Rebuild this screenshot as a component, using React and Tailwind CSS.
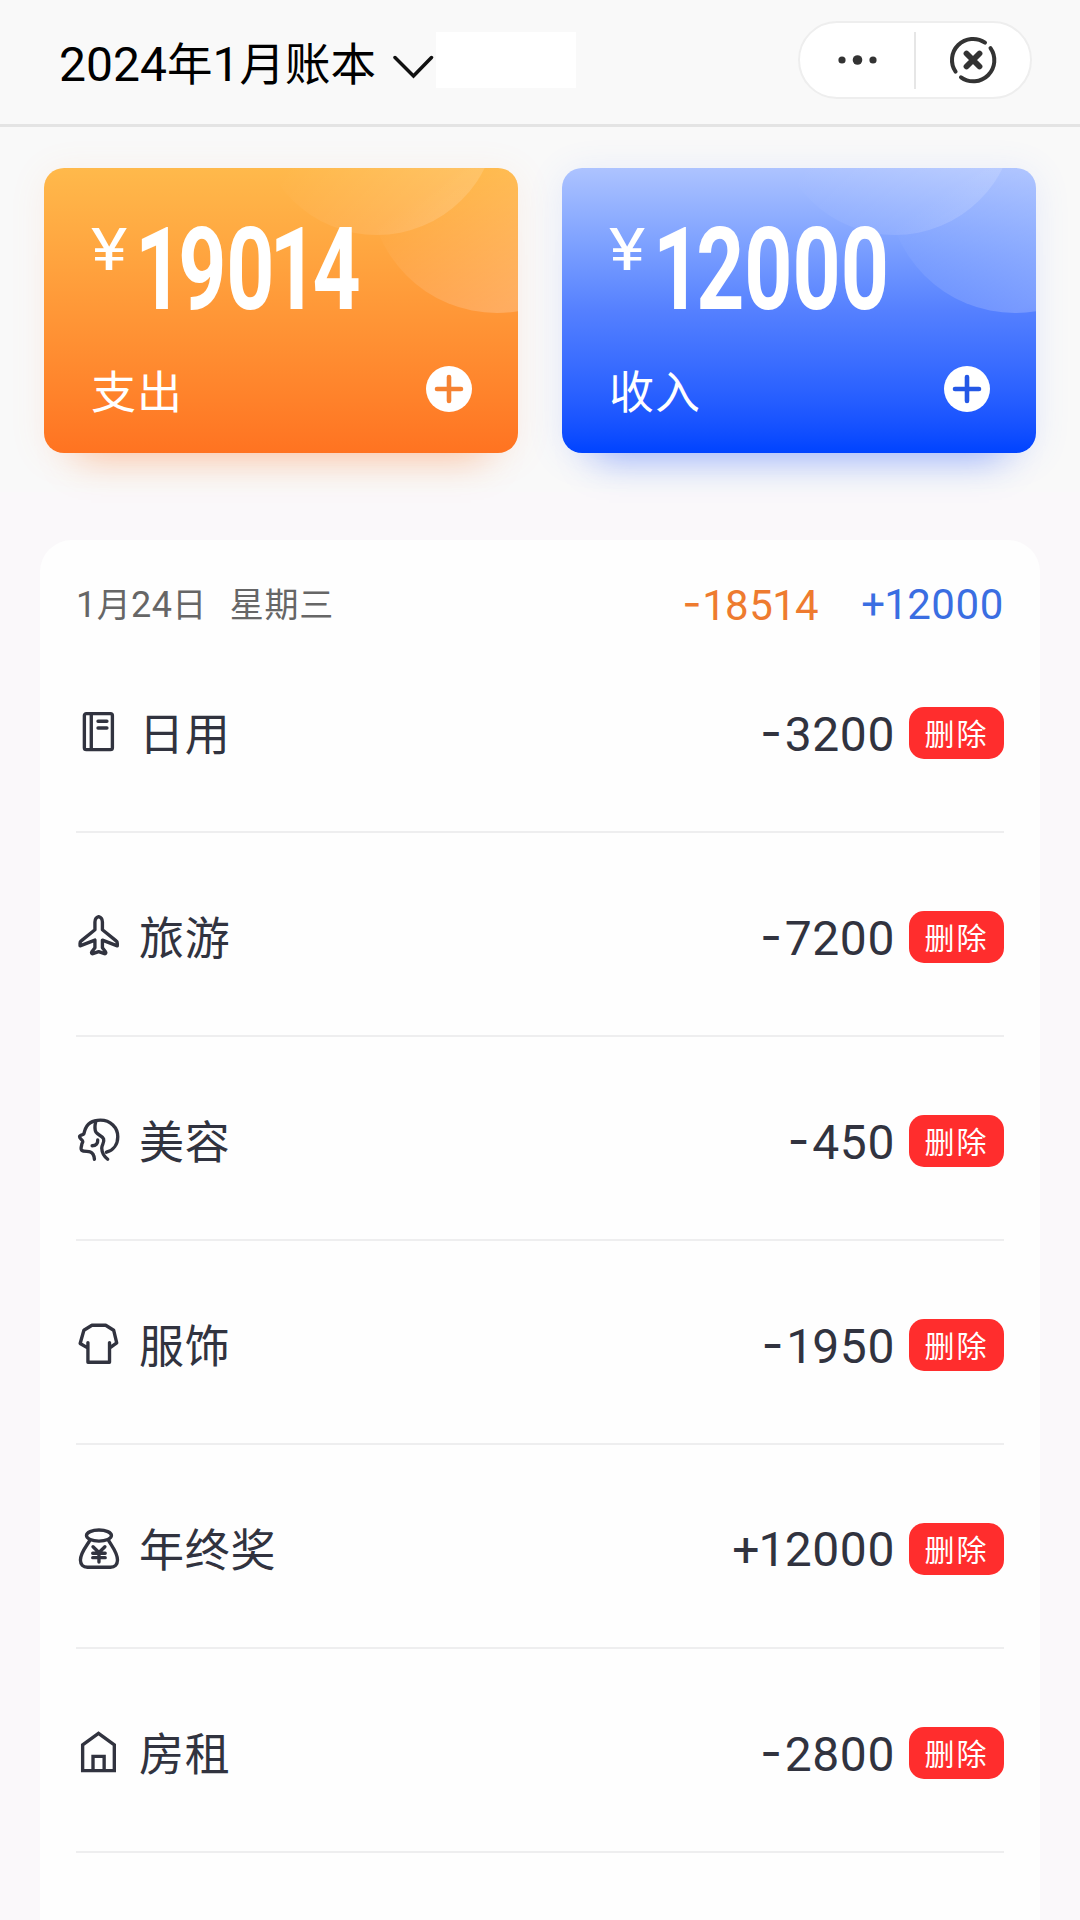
const RECORDS = [
  { icon: 'book', label: '日用', sign: '-', amount: '3200' },
  { icon: 'plane', label: '旅游', sign: '-', amount: '7200' },
  { icon: 'beauty', label: '美容', sign: '-', amount: '450' },
  { icon: 'shirt', label: '服饰', sign: '-', amount: '1950' },
  { icon: 'bonus', label: '年终奖', sign: '+', amount: '12000' },
  { icon: 'house', label: '房租', sign: '-', amount: '2800' },
]

const ICONS = {
  book: (
    <>
      <rect x="9.8" y="3.8" width="29.2" height="37.5" rx="2" />
      <path d="M17 4v37M24 11.800h9.300M24 18.800h9.300" />
    </>
  ),
  plane: (
    <path d="M24.700 2.800C22.300 3.400 20.800 5.500 20.800 8.500V16.500L6.500 28c-.8.6-1.200 1.400-1.200 2.400v2.800l15.500-6v8l-3.200 4.200c-.8 1.200-.2 2.200 1 2l6.100-2.200 6.100 2.200c1.200.2 1.800-.8 1-2l-3.200-4.200v-8l15.500 6v-2.800c0-1-.4-1.800-1.200-2.400L28.600 16.500V8.500c0-3-1.500-5.100-3.900-5.700Z" />
  ),
  beauty: (
    <>
      <path d="M20.3 43c-.3-3.5-1.700-6.800-4.500-7.700-2.300-.8-6.800-.1-8.700-1.600-1.700-1.400-.2-4 0-6.200.1-1.200 1.500-2.400 1-3.300-.7-1.600-3.300-3-3.300-4.700 0-1.700 3.700-1.700 4.400-2.900C10.500 13 10.500 8.500 16 5c3.200-2.100 6.400-2.700 10.500-2.700C37 2.300 44.600 10 44.600 19.500c0 8-4.600 14.200-11.800 16.200" />
      <path d="M21.700 3.500c-1 4-1.300 8.500.2 11.300 1.800 3.100 6.500 3.500 7.900 7 1.300 3.700-2 6-1.900 9.700.2 4.500 2.400 8.500 6.200 11.500M23.700 23c.2 3.300-1.500 5.900-5.800 6" />
    </>
  ),
  shirt: (
    <path d="M13.500 21.500V42H36V21.500M13.200 27 5.400 22.500 9.300 8.600 17.700 3.400H32l8.300 5.200 3.200 13.200L36.300 27" />
  ),
  bonus: (
    <>
      <ellipse cx="25" cy="10" rx="13" ry="5.8" />
      <path d="M15.500 15C12.500 20.500 5.700 27.500 5.700 35.500c0 4.500 2.800 7.500 7.300 7.500h24c4.500 0 7.300-3 7.300-7.500 0-8-6.300-15-9.300-20.500" />
      <path d="m18.800 21.700 6.200 6 6.200-6M25 28v9.500M18.500 28.400h13M18.500 33h13" />
    </>
  ),
  house: (
    <path strokeLinejoin="miter" d="M24.500 3.500 8 15.500V42.300H41V15.500ZM18.800 42V27.500h11.600V42" />
  ),
}

function PlusIcon({ className }) {
  return (
    <svg className={`w-[46px] h-[46px] ${className}`} viewBox="0 0 46 46" fill="none">
      <circle cx="23" cy="23" r="23" fill="#fff" />
      <path d="M23 11v24M11 23h24" stroke="currentColor" strokeWidth="4.6" strokeLinecap="round" />
    </svg>
  )
}

// Tightens the space on both sides of every 1
function Digits({ value, tightClass = 'tracking-[-0.018em]' }) {
  return value.split('').map((d, i) => (
    <span key={i} className={d === '1' || value[i + 1] === '1' ? tightClass : undefined}>{d}</span>
  ))
}

function Sign({ value, className = '' }) {
  if (value === '+') return <span className="tracking-[-0.02em]">+</span>
  return <span className={`relative -top-[0.035em] font-['Inter'] ${className}`}>-</span>
}

function SummaryCard({ id, amount, label, cardClass, plusClass }) {
  return (
    <section className={`relative w-[474px] h-[285px] rounded-[20px] text-white ${cardClass}`}>
      {/* Bubbles */}
      <svg className="absolute inset-0 w-full h-full rounded-[20px]" viewBox="0 0 474 285">
        <defs>
          <linearGradient id={`${id}-a`} x1="0.1" y1="0.6" x2="0.7" y2="1">
            <stop offset="0.1" stopColor="#fff" stopOpacity="0" />
            <stop offset="1" stopColor="#fff" stopOpacity="0.14" />
          </linearGradient>
          <linearGradient id={`${id}-b`} x1="0.15" y1="0.5" x2="0.5" y2="1">
            <stop offset="0.1" stopColor="#fff" stopOpacity="0" />
            <stop offset="1" stopColor="#fff" stopOpacity="0.2" />
          </linearGradient>
        </defs>
        <circle cx="333" cy="-53" r="120" fill={`url(#${id}-a)`} />
        <circle cx="453" cy="17" r="128" fill={`url(#${id}-b)`} />
      </svg>

      <div className="relative flex h-full flex-col justify-between pl-[47px] pr-[46px] pt-[60px] pb-[41px]">
        <div className="flex h-[83px] items-start">
          <span className="w-[40px] origin-left scale-x-[1.15] text-[60px] leading-[44px]">¥</span>
          <span className="ml-[4px] origin-left scale-x-[0.73] whitespace-nowrap text-[115px] leading-[84px] font-bold">
            <Digits value={amount} tightClass="tracking-[-0.06em]" />
          </span>
        </div>
        <div className="flex h-[46px] items-center justify-between">
          <span className="pt-[9px] text-[45px] leading-[46px] tracking-[1px]">{label}</span>
          <PlusIcon className={plusClass} />
        </div>
      </div>
    </section>
  )
}

function RecordRow({ icon, label, sign, amount }) {
  return (
    <li className="flex h-[204px] items-center border-b-2 border-[#eeeeef] pt-[6px] text-[#31333f]">
      <svg
        className="h-12 w-12 shrink-0 -ml-[2px]"
        viewBox="-1 -1 50 50"
        fill="none"
        stroke="currentColor"
        strokeWidth="3.5"
        strokeLinecap="round"
        strokeLinejoin="round"
      >
        {ICONS[icon]}
      </svg>
      <span className="ml-[17px] flex-1 pt-[6px] text-[45px] leading-[52px] tracking-[0.7px]">{label}</span>
      <span className="pt-[2px] text-[48px] leading-[52px] tracking-[0.6px]">
        <Sign value={sign} className="mr-[2px]" />
        <Digits value={amount} />
      </span>
      <button className="ml-[14px] h-[52px] w-[95px] rounded-[15px] bg-[#ff2d2d] pt-[3px] text-[30px] leading-[49px] tracking-[2px] text-white">
        删除
      </button>
    </li>
  )
}

export default function App() {
  return (
    <div className="flex h-[1920px] w-[1080px] flex-col overflow-hidden bg-[#faf8fa] font-['Roboto','Noto_Sans_CJK_SC',sans-serif]">
      {/* Title bar */}
      <header className="flex h-[127px] shrink-0 items-start border-b-[3px] border-[#e4e4e4] bg-[#f9f9f9] pl-[59px] pr-12">
        <h1 className="mt-[35px] w-[334px] whitespace-nowrap text-[48px] leading-[60px] text-black">
          2024<span className="text-[45.5px]">年</span>1<span className="text-[45.5px]">月账本</span>
        </h1>
        <svg className="mt-[54px] h-[26px] w-[42px]" viewBox="0 0 42 26" fill="none" stroke="#111" strokeWidth="3.5" strokeLinecap="round">
          <path d="M2 3.500 20.500 22 38.500 3.500" />
        </svg>
        <div className="ml-px mt-8 h-14 w-[140px] bg-white" />
        <div className="ml-auto mt-[21px] flex h-[78px] w-[234px] items-center rounded-full border-2 border-[#eeeeee] bg-white">
          <svg className="ml-[37px] h-[12px] w-[42px]" viewBox="0 0 42 12" fill="#333">
            <circle cx="5" cy="6" r="3.6" />
            <circle cx="20.5" cy="6" r="4.8" />
            <circle cx="36" cy="6" r="3.6" />
          </svg>
          <div className="ml-[35px] h-[57px] w-[2px] bg-[#e6e6e6]" />
          <svg className="ml-[32px] h-[50px] w-[50px]" viewBox="0 0 50 50" fill="none" stroke="#333" strokeWidth="4" strokeLinecap="round">
            <path d="M37 7.700A21 21 0 0 0 7.600 36.700M42.500 13.200A21 21 0 0 1 13 42.300" />
            <path d="m18.500 18.500 13 13m0-13-13 13" strokeWidth="5.8" />
          </svg>
        </div>
      </header>

      {/* Totals */}
      <div className="flex h-[365px] shrink-0 gap-11 bg-[#f9f9f9] px-11 pt-[41px]">
        <SummaryCard
          id="out"
          amount="19014"
          label="支出"
          cardClass="bg-linear-to-b from-[#ffb94b] to-[#ff7321] shadow-[0_40px_36px_-34px_rgba(255,115,33,0.35),0_4px_36px_rgba(255,150,90,0.1)]"
          plusClass="text-[#f58232]"
        />
        <SummaryCard
          id="in"
          amount="12000"
          label="收入"
          cardClass="bg-linear-to-b from-[#adc3ff] via-[#5580ff] to-[#0043ff] shadow-[0_40px_36px_-34px_rgba(40,90,255,0.4),0_4px_36px_rgba(80,120,255,0.12)]"
          plusClass="text-[#2458e6]"
        />
      </div>

      {/* Day list */}
      <main className="mx-10 mt-12 h-[1500px] shrink-0 rounded-[32px] bg-[#fefefe] px-9">
        <div className="flex h-[89px] items-center pt-[41px] text-[42px] leading-[48px]">
          <span className="flex-1 whitespace-pre text-[34px] tracking-[0.4px] text-[#666]">
            <span className="text-[36px]">1</span>月<span className="text-[36px]">24</span>日<span className="ml-[23px] tracking-[0.8px]">星期三</span>
          </span>
          <span className="tracking-[0.6px] text-[#ee7b2f]">
            <Sign value="-" />
            <Digits value="18514" />
          </span>
          <span className="ml-[42px] tracking-[0.6px] text-[#3a6ee2]">
            <Sign value="+" />
            <Digits value="12000" />
          </span>
        </div>
        <ul>
          {RECORDS.map((r) => (
            <RecordRow key={r.label} {...r} />
          ))}
        </ul>
      </main>
    </div>
  )
}
